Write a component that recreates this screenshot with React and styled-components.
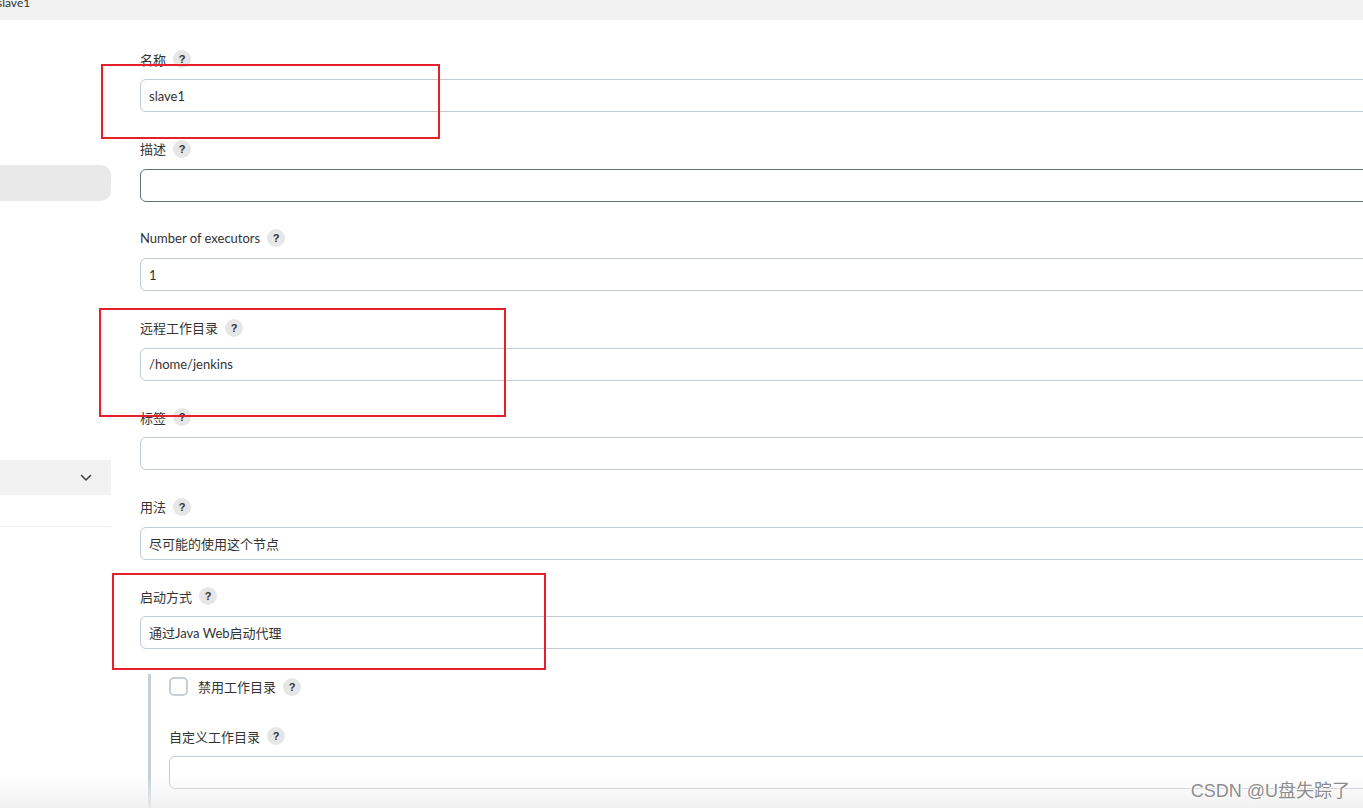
import React from "react";
import styled, { createGlobalStyle } from "styled-components";

const GlobalStyle = createGlobalStyle`
  html, body { margin: 0; padding: 0; background: #fff; }
  body {
    font-family: "Lato", "Noto Sans CJK SC", sans-serif;
    color: #333;
    overflow: hidden;
  }
  * { box-sizing: border-box; }
`;

const Page = styled.div`
  position: relative;
  width: 1363px;
  height: 808px;
  overflow: hidden;
  display: flex;
  flex-direction: column;
  background: #fff;
`;

const TopBar = styled.div`
  height: 20px;
  flex: none;
  background: #f2f2f2;
  font-size: 12px;
  line-height: 12px;
  color: #333;
  overflow: hidden;
  span { display: block; margin-left: -3px; margin-top: -3px; }
`;

const Body = styled.div`
  flex: 1;
  display: flex;
  min-height: 0;
`;

const Sidebar = styled.nav`
  width: 111px;
  flex: none;
  display: flex;
  flex-direction: column;
`;

const SideItem = styled.div`
  margin-top: 145px;
  height: 36px;
  background: #e9e9e9;
  border-radius: 0 10px 10px 0;
`;

const SideDropdown = styled.div`
  margin-top: 259px;
  height: 35px;
  background: #f2f2f2;
  display: flex;
  align-items: center;
  justify-content: flex-end;
  padding-right: 19px;
  color: #444;
`;

const SideDivider = styled.div`
  margin-top: 31px;
  height: 1px;
  background: #ececec;
`;

const Main = styled.main`
  flex: 1;
  min-width: 0;
  padding: 29px 0 0 29px;
  overflow: hidden;
`;

const Field = styled.div`
  margin-bottom: 26.5px;
`;

const LabelRow = styled.div`
  display: flex;
  align-items: center;
  height: 20px;
  gap: 7px;
  margin-bottom: 10px;
  font-size: 13px;
  color: #333;
`;

const Help = styled.span`
  width: 18px;
  height: 18px;
  border-radius: 50%;
  background: #e6e6e6;
  display: inline-flex;
  align-items: center;
  justify-content: center;
  font-size: 11px;
  font-weight: 700;
  color: #333;
  font-family: "Liberation Sans", sans-serif;
`;

const Input = styled.div`
  width: calc(100% + 20px);
  height: 33px;
  border: 1px solid ${(p) => (p.$focused ? "#5f707a" : "#c4ccd3")};
  border-radius: 6px;
  display: flex;
  align-items: center;
  padding-left: 8px;
  font-size: 13px;
  color: #333;
  background: #fff;
`;

const Nested = styled.div`
  margin-left: 8px;
  border-left: 3px solid #c6cfd5;
  padding: 3px 0 40px 18px;
`;

const CheckRow = styled.div`
  display: flex;
  align-items: center;
  height: 19px;
  gap: 10px;
  font-size: 13px;
  margin-bottom: 30px;
`;

const CheckBox = styled.span`
  width: 19px;
  height: 19px;
  border: 2px solid #c6cfd5;
  border-radius: 5px;
  flex: none;
`;

const CheckLabel = styled.span`
  display: flex;
  align-items: center;
  gap: 7px;
`;

const Annotation = styled.div`
  position: absolute;
  border: 2px solid #e5202a;
  pointer-events: none;
`;

const BottomFade = styled.div`
  position: absolute;
  left: 0;
  right: 0;
  bottom: 0;
  height: 32px;
  background: linear-gradient(to bottom, rgba(240,240,240,0), rgba(238,238,238,0.85));
  pointer-events: none;
`;

const Watermark = styled.div`
  position: absolute;
  right: 13px;
  bottom: 6px;
  font-family: "Liberation Sans", "Noto Sans CJK SC", sans-serif;
  font-size: 18px;
  color: #8c8c8c;
  text-shadow: -1px 0 #fff, 1px 0 #fff, 0 -1px #fff, 0 1px #fff;
  pointer-events: none;
`;

const Chevron = () => (
  <svg width="12" height="8" viewBox="0 0 12 8" fill="none">
    <polyline points="1.5,1.5 6,6 10.5,1.5" stroke="#444" strokeWidth="1.6" strokeLinecap="round" strokeLinejoin="round" />
  </svg>
);

const FormField = ({ label, value, focused }) => (
  <Field>
    <LabelRow>
      <span>{label}</span>
      <Help>?</Help>
    </LabelRow>
    <Input $focused={focused}>{value}</Input>
  </Field>
);

export default function App() {
  return (
    <>
      <GlobalStyle />
      <Page>
        <TopBar><span>slave1</span></TopBar>
        <Body>
          <Sidebar>
            <SideItem />
            <SideDropdown><Chevron /></SideDropdown>
            <SideDivider />
          </Sidebar>
          <Main>
            <FormField label="名称" value="slave1" />
            <FormField label="描述" value="" focused />
            <FormField label="Number of executors" value="1" />
            <FormField label="远程工作目录" value="/home/jenkins" />
            <FormField label="标签" value="" />
            <FormField label="用法" value="尽可能的使用这个节点" />
            <Field style={{ marginBottom: 25 }}>
              <LabelRow>
                <span>启动方式</span>
                <Help>?</Help>
              </LabelRow>
              <Input>通过Java Web启动代理</Input>
            </Field>
            <Nested>
              <CheckRow>
                <CheckBox />
                <CheckLabel>
                  <span>禁用工作目录</span>
                  <Help>?</Help>
                </CheckLabel>
              </CheckRow>
              <FormField label="自定义工作目录" value="" />
            </Nested>
          </Main>
        </Body>
        <BottomFade />
        <Annotation style={{ left: 101, top: 64, width: 339, height: 75 }} />
        <Annotation style={{ left: 99, top: 308, width: 407, height: 109 }} />
        <Annotation style={{ left: 112, top: 573, width: 434, height: 97 }} />
        <Watermark>CSDN @U盘失踪了</Watermark>
      </Page>
    </>
  );
}
